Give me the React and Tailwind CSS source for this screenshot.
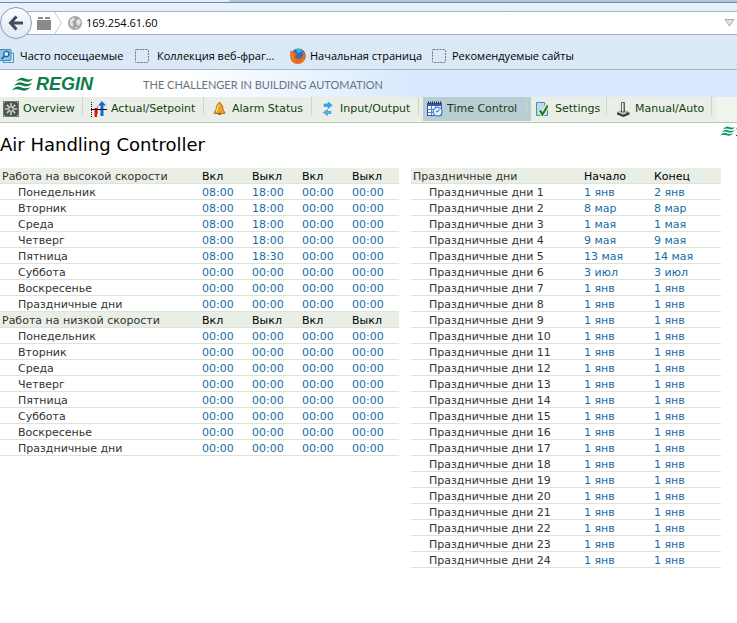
import React from "react";

const browserFont = "font-['Open_Sans','Noto_Sans',sans-serif]";

function Waves({ className }) {
  return (
    <svg viewBox="0 0 22 14" className={className} fill="currentColor" aria-hidden="true">
      <path d="M4 4.500C7 .5 10 0 13 1.500c3 1.300 5 1.300 8 0-2.500 3.300-5 4-8.500 2.800C9 3 7 3 4 4.500z" />
      <path d="M2 9c3-4 6-4.500 9-3 3 1.300 5 1.300 9.500 0-3 3.300-6 4-9.500 2.800C7.500 7.500 5 7.500 2 9z" />
      <path d="M0 13.300c3-4 6-4.500 9-3 3 1.300 5.500 1.300 9.500 0-3 3.300-6 4-9.500 2.800-3.500-1.300-6-1.300-9 .2z" />
    </svg>
  );
}

function FanIcon() {
  return (
    <svg viewBox="0 0 16 16" className="size-4 shrink-0" aria-hidden="true">
      <rect width="16" height="16" fill="#4b5552" />
      <rect x=".5" y=".5" width="15" height="15" fill="none" stroke="#6f7975" />
      <g stroke="#c3cbc7" strokeWidth="1.700">
        <path d="M8 2v12M2 8h12M3.800 3.800l8.400 8.400M12.200 3.800l-8.400 8.400" />
      </g>
      <circle cx="8" cy="8" r="1.600" fill="#4b5552" />
      <path d="M1 1h1v1H1zM14 1h1v1h-1zM1 14h1v1H1zM14 14h1v1h-1z" fill="#bfc6c2" />
    </svg>
  );
}

function SetpointIcon() {
  return (
    <svg viewBox="0 0 16 16" className="size-4 shrink-0" aria-hidden="true">
      <path d="M.5 1v15" stroke="#111" strokeDasharray="1 1" />
      <path d="M3 7h3v9H3z" fill="#e01212" />
      <path d="M3 7h1v9H3z" fill="#f08080" />
      <path d="M6 5h1v8H6z" fill="#d66" />
      <path d="M11 0l4 4.500h-2.500V15h-3V4.500H7z" fill="#1766d8" />
      <path d="M0 8.500h16" stroke="#111" />
    </svg>
  );
}

function BellIcon() {
  return (
    <svg viewBox="0 0 16 16" className="size-4 shrink-0" aria-hidden="true">
      <path d="M7.500 1.500c1 0 1.400.7 1.400 1.500 1.500 1 1.800 2.600 2 4.600.2 1.700.8 2.600 1.900 3.400v1.500H2.200V11c1.100-.8 1.700-1.700 1.900-3.400.2-2 .5-3.600 2-4.600 0-.8.4-1.500 1.400-1.500z" fill="#eda11c" stroke="#7d5310" strokeWidth=".7" />
      <path d="M6.500 4C5.300 5.500 5.500 8.500 4.500 10.500" stroke="#ffe08a" strokeWidth="1.300" fill="none" />
      <path d="M6 12.500h3v1.200H6z" fill="#6e450b" />
    </svg>
  );
}

function ArrowsIcon() {
  return (
    <svg viewBox="0 0 16 16" className="size-4 shrink-0" aria-hidden="true">
      <path d="M4 3h4V1l4.200 3.300L8 7.500v-2H4z" fill="#35aef0" stroke="#1b7fc0" strokeWidth=".5" />
      <path d="M11 12.500H7.500v2L3.300 11.500l4.200-3v2H11z" fill="#45b9f5" stroke="#1b7fc0" strokeWidth=".5" />
    </svg>
  );
}

function CalendarIcon() {
  return (
    <svg viewBox="0 0 16 16" className="size-4 shrink-0" aria-hidden="true">
      <rect x=".5" y="2.500" width="14" height="12" fill="#f4f8ff" stroke="#3158a3" />
      <path d="M1 3h13v2H1z" fill="#2f5cb4" />
      <path d="M1 1.500h14" stroke="#222" strokeWidth="2" strokeDasharray="1 1" />
      <path d="M1 8.500h13M1 11.500h13M4.500 5v9M8.500 5v9" stroke="#5d84c6" />
      <circle cx="10.700" cy="10.700" r="4.400" fill="#e5f3fc" stroke="#4a94d2" strokeWidth="1.500" />
      <path d="M10.700 10.700l1.800-2.200M10.700 10.700H9" stroke="#235" strokeWidth=".9" fill="none" />
    </svg>
  );
}

function SettingsIcon() {
  return (
    <svg viewBox="0 0 16 16" className="size-4 shrink-0" aria-hidden="true">
      <path d="M1.500 1.500h8l3 3v10h-11z" fill="#b9dcf1" stroke="#5288ac" />
      <path d="M9.500 1.500v3h3" fill="#fff" stroke="#5288ac" strokeWidth=".8" />
      <path d="M5 9.500l2.500 4L12.500 5" fill="none" stroke="#fff" strokeWidth="4" />
      <path d="M5 9.500l2.500 4L12.500 5" fill="none" stroke="#257c1c" strokeWidth="2.400" />
    </svg>
  );
}

function JoystickIcon() {
  return (
    <svg viewBox="0 0 16 16" className="size-4 shrink-0" aria-hidden="true">
      <path d="M2 11.500l6-3 6.500 3v2L8.500 16 2 13.500z" fill="#3a3a3a" />
      <path d="M2.500 11.300L8 9l6 2.300-5.700 2.500z" fill="#c9c9c9" />
      <path d="M6.500 1.500h3v9.500h-3z" fill="#a8a8a8" stroke="#444" strokeWidth=".8" />
      <path d="M7 2h1v8H7z" fill="#f3f3f3" />
      <path d="M11 11.500h1.500" stroke="#d22" />
    </svg>
  );
}

function FirefoxIcon() {
  return (
    <svg viewBox="0 0 16 16" className="size-4 shrink-0" aria-hidden="true">
      <circle cx="8.300" cy="7.700" r="7.300" fill="#2374b8" />
      <path d="M6 1.500c2-1 5-.5 6.500 1-1 2-3 1-4.500 3z" fill="#49b0e4" />
      <path d="M.8 2.500C2 3.500 3.500 3.500 5 3.800 4.300 5 5.500 6 7.500 6.200 6.500 7.500 5.300 7.800 5 9c1 2.200 4.500 2.200 6.500.5C13.500 8 13.300 5 12 3c3 1.300 4 4 3.600 6.300C14.800 13.500 11.500 16 8 16 3.500 16 .3 12.500.2 8.500.1 6 .2 4 .8 2.500z" fill="#e9661c" />
      <path d="M15.600 6c.3 4-2 7-5.600 8 3-.3 5.500-3 5.600-8z" fill="#fbc22e" />
      <path d="M1.500 5c-.3 4 1 7 4 8.500C3.500 11 2.500 8.500 3 6z" fill="#f79a2c" />
    </svg>
  );
}

function SearchFolderIcon() {
  return (
    <svg viewBox="0 0 14 16" className="h-4 w-3.5 shrink-0" aria-hidden="true">
      <path d="M10 5h3.500v9.500H3V12z" fill="#d9eefa" stroke="#4d94c4" />
      <rect x="-1" y="1.500" width="12" height="11" rx="1" fill="#8ac5e8" stroke="#3d87bb" />
      <circle cx="6.300" cy="6" r="2.600" fill="#d7effb" stroke="#1e5f94" strokeWidth="1.300" />
      <path d="M4.500 8L1.500 11" stroke="#1e5f94" strokeWidth="1.700" />
    </svg>
  );
}

function DashedIcon() {
  return (
    <svg viewBox="0 0 14 14" className="size-3.5 shrink-0" aria-hidden="true">
      <rect x=".5" y=".5" width="13" height="13" rx="1" fill="none" stroke="#6c747d" strokeDasharray="2 1" />
    </svg>
  );
}

const bookmarks = [
  { label: "Часто посещаемые", icon: <SearchFolderIcon />, box: "w-[135px] gap-1.5" },
  { label: "Коллекция веб-фраг...", icon: <DashedIcon />, box: "w-[155px] gap-2" },
  { label: "Начальная страница", icon: <FirefoxIcon />, box: "w-[142px] gap-1" },
  { label: "Рекомендуемые сайты", icon: <DashedIcon />, box: "gap-1.5" },
];

const navItems = [
  { label: "Overview", icon: <FanIcon />, box: "w-[87px] pl-[3px]" },
  { label: "Actual/Setpoint", icon: <SetpointIcon />, box: "w-[121px] pl-1" },
  { label: "Alarm Status", icon: <BellIcon />, box: "w-[108px] pl-1" },
  { label: "Input/Output", icon: <ArrowsIcon />, box: "w-[107px] pl-1" },
  { label: "Time Control", icon: <CalendarIcon />, box: "w-[108px] pl-1", active: true },
  { label: "Settings", icon: <SettingsIcon />, box: "w-[80px] pl-1" },
  { label: "Manual/Auto", icon: <JoystickIcon />, box: "w-[105px] pl-1" },
];

const off = ["00:00", "00:00", "00:00", "00:00"];
const work = ["08:00", "18:00", "00:00", "00:00"];
const dayNames = ["Понедельник", "Вторник", "Среда", "Четверг", "Пятница", "Суббота", "Воскресенье", "Праздничные дни"];

const scheduleGroups = [
  {
    title: "Работа на высокой скорости",
    times: [work, work, work, work, ["08:00", "18:30", "00:00", "00:00"], off, off, off],
  },
  { title: "Работа на низкой скорости", times: dayNames.map(() => off) },
];

const setHolidays = [
  ["1 янв", "2 янв"],
  ["8 мар", "8 мар"],
  ["1 мая", "1 мая"],
  ["9 мая", "9 мая"],
  ["13 мая", "14 мая"],
  ["3 июл", "3 июл"],
];
const holidays = Array.from({ length: 24 }, (_, i) => setHolidays[i] || ["1 янв", "1 янв"]);

const cell = "border-b border-[#dbe4d5] pt-0.5 text-left font-normal";

function HeadRow({ title, columns }) {
  return (
    <tr className="h-4 bg-[#e9efe7]">
      <th scope="col" className={`px-0.5 text-[#333] ${cell}`}>{title}</th>
      {columns.map((c, i) => (
        <th key={i} scope="col" className={`px-0.5 text-black ${cell}`}>{c}</th>
      ))}
    </tr>
  );
}

function DataRow({ name, values }) {
  return (
    <tr className="h-4">
      <th scope="row" className={`pl-[18px] text-[#333] ${cell}`}>{name}</th>
      {values.map((v, i) => (
        <td key={i} className={`px-0.5 ${cell}`}>
          <a href="#edit" className="text-[#1c6ba5]">{v}</a>
        </td>
      ))}
    </tr>
  );
}

function BrowserChrome() {
  return (
    <header className={`bg-[#dbe8f6] text-[11px] text-black ${browserFont}`}>
      <div className="h-[3px] border-b border-[#6f8dab] bg-[#b3c6dc]">
        <div className="h-0.5 w-[230px] rounded-br-sm bg-[#e3edf8]" />
      </div>
      <div className="flex h-10 items-center bg-linear-to-b from-[#e9f2fb] to-[#dbe8f6]">
        <button type="button" aria-label="Back" className="z-10 flex size-8 shrink-0 items-center justify-center rounded-full border border-[#8b9db3] bg-linear-to-b from-[#fafcfe] to-[#dfe8f2]">
          <svg viewBox="0 0 16 16" className="size-4" fill="none" stroke="#414d5c" strokeWidth="3" aria-hidden="true">
            <path d="M8.500 1.500L2.500 8l6 6.500M2.500 8H15" />
          </svg>
        </button>
        <div className="-ml-2 flex h-6 min-w-0 flex-1 items-center border-y border-[#9fb3ca] bg-white pr-0.5 pl-[13px]">
          <svg viewBox="0 0 14 13" className="h-[13px] w-3.5 shrink-0" fill="#8a8a8a" aria-hidden="true">
            <path d="M0 3h14v10H0zM1 0h5v2H1zM8 0h5v2H8z" />
          </svg>
          <svg viewBox="0 0 9 22" className="ml-[3px] h-[22px] w-[9px] shrink-0" fill="none" stroke="#c3cad2" aria-hidden="true">
            <path d="M.5 0l7 11-7 11" />
          </svg>
          <svg viewBox="0 0 14 14" className="ml-[5px] size-3.5 shrink-0" aria-hidden="true">
            <circle cx="7" cy="7" r="7" fill="#a4a4a4" />
            <path d="M2 4l3-2.500 2 1L5.500 5 4 6l1.500 2-1 3L2 8.500zM8 5l3-2.500L13 6l-2 4-2-1zM7 11l3 .5-2 1.500z" fill="#e4e4e4" />
          </svg>
          <input aria-label="Address" defaultValue="169.254.61.60" className="ml-1 min-w-0 flex-1 bg-transparent text-black outline-none" />
          <svg viewBox="0 0 11 8" className="h-2 w-[11px] shrink-0" fill="#dfe5ec" stroke="#a5adb7" aria-hidden="true">
            <path d="M1 .5h9L5.500 7z" />
          </svg>
        </div>
      </div>
      <nav aria-label="Bookmarks" className="flex h-[27px] items-center border-b border-[#a5b8ce]">
        {bookmarks.map((b) => (
          <a key={b.label} href="#bookmark" className={`flex shrink-0 items-center whitespace-nowrap ${b.box}`}>
            {b.icon}
            {b.label}
          </a>
        ))}
      </nav>
    </header>
  );
}

export default function App() {
  return (
    <div className="min-h-screen overflow-x-hidden bg-white font-['DejaVu_Sans',Verdana,sans-serif] text-[11px]">
      <BrowserChrome />

      <div className="flex h-[27px] items-center gap-0.5 bg-linear-to-r from-white from-25% to-[#d9eafe] to-55% pl-3 whitespace-nowrap">
        <Waves className="h-3.5 w-[22px] text-[#0b7d49]" />
        <span className="w-[105px] font-['Liberation_Sans',Arial,sans-serif] text-[18px] leading-none font-bold text-[#0b7d49] italic">REGIN</span>
        <span className="pt-1 font-['Lato',sans-serif] text-[11px] text-[#68737f]">THE CHALLENGER IN BUILDING AUTOMATION</span>
      </div>

      <nav aria-label="Main" className="flex h-[26px] border-b border-[#b4c9b2] bg-[#eff4ed]">
        {navItems.map((n) => (
          <a
            key={n.label}
            href="#section"
            aria-current={n.active ? "page" : undefined}
            className={`flex h-6 shrink-0 items-center pr-1 whitespace-nowrap text-[#123f12] ${n.box} ${n.active ? "bg-[#b9cdd5]" : "bg-[#e9efe7]"}`}
          >
            {n.icon}
            <span className="ml-1 flex-1">{n.label}</span>
            <span className="mb-1.5 h-[18px] w-px shrink-0 bg-[#cbd8cc]" />
          </a>
        ))}
      </nav>

      <div className="flex h-[45px] justify-between">
        <h1 className="pt-2.5 text-[18px] leading-6 text-black">Air Handling Controller</h1>
        <a href="#vendor" className="flex h-4 w-[17px] items-center overflow-hidden text-[#2a12e0] underline">
          <Waves className="h-2.5 w-4 shrink-0 text-[#0f9a62]" />
          www
        </a>
      </div>

      <main className="flex items-start gap-3 pr-4 leading-[13px]">
        <table className="min-w-0 flex-[399_1_0%] table-fixed border-separate border-spacing-0 whitespace-nowrap">
          <colgroup>
            <col />
            <col className="w-[50px]" />
            <col className="w-[50px]" />
            <col className="w-[50px]" />
            <col className="w-[49px]" />
          </colgroup>
          {scheduleGroups.map((g) => (
            <tbody key={g.title}>
              <HeadRow title={g.title} columns={["Вкл", "Выкл", "Вкл", "Выкл"]} />
              {g.times.map((t, i) => (
                <DataRow key={dayNames[i]} name={dayNames[i]} values={t} />
              ))}
            </tbody>
          ))}
        </table>

        <table className="min-w-0 flex-[310_1_0%] table-fixed border-separate border-spacing-0 whitespace-nowrap">
          <colgroup>
            <col />
            <col className="w-[70px]" />
            <col className="w-[69px]" />
          </colgroup>
          <tbody>
            <HeadRow title="Праздничные дни" columns={["Начало", "Конец"]} />
            {holidays.map((h, i) => (
              <DataRow key={i} name={`Праздничные дни ${i + 1}`} values={h} />
            ))}
          </tbody>
        </table>
      </main>
    </div>
  );
}
